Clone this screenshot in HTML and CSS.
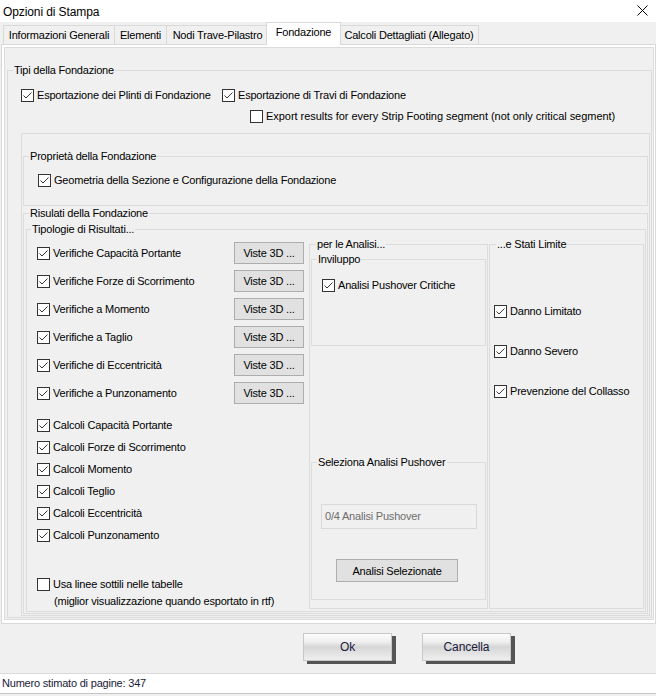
FILE: index.html
```html
<!DOCTYPE html>
<html lang="it">
<head>
<meta charset="utf-8">
<title>Opzioni di Stampa</title>
<link rel="stylesheet" href="styles.css">
</head>
<body>
<div class="window">
  <div class="titlebar">
    <span class="title">Opzioni di Stampa</span>
    <svg class="close" viewBox="0 0 11 11" width="11" height="11"><path d="M0.5 0.5L10.5 10.5M10.5 0.5L0.5 10.5"/></svg>
  </div>
  <div class="tabs">
    <div class="tab t1">Informazioni Generali</div>
    <div class="tab t2">Elementi</div>
    <div class="tab t3">Nodi Trave-Pilastro</div>
    <div class="tab active">Fondazione</div>
    <div class="tab t5">Calcoli Dettagliati (Allegato)</div>
  </div>
  <div class="tabpanel">
    <div class="page">
      <fieldset class="grp tipi">
        <legend>Tipi della Fondazione</legend>
        <div class="row row1">
          <label class="cb first"><span class="box"><svg viewBox="0 0 11 11"><polyline points="1.5,5.5 4,8 9.5,2.5"/></svg></span>Esportazione dei Plinti di Fondazione</label>
          <label class="cb"><span class="box"><svg viewBox="0 0 11 11"><polyline points="1.5,5.5 4,8 9.5,2.5"/></svg></span>Esportazione di Travi di Fondazione</label>
        </div>
        <div class="row row2">
          <label class="cb export"><span class="box"></span>Export results for every Strip Footing segment (not only critical segment)</label>
        </div>
        <div class="boxa">
          <fieldset class="grp prop">
            <legend>Proprietà della Fondazione</legend>
            <div class="row prow">
              <label class="cb"><span class="box"><svg viewBox="0 0 11 11"><polyline points="1.5,5.5 4,8 9.5,2.5"/></svg></span>Geometria della Sezione e Configurazione della Fondazione</label>
            </div>
          </fieldset>
          <fieldset class="grp ris">
            <legend>Risulati della Fondazione</legend>
            <fieldset class="grp tipol">
              <legend>Tipologie di Risultati...</legend>
              <div class="cols">
                <div class="leftcol">
                  <div class="viste">
                    <div class="vrow"><label class="cb"><span class="box"><svg viewBox="0 0 11 11"><polyline points="1.5,5.5 4,8 9.5,2.5"/></svg></span>Verifiche Capacità Portante</label><button class="btn viste3d">Viste 3D ...</button></div>
                    <div class="vrow"><label class="cb"><span class="box"><svg viewBox="0 0 11 11"><polyline points="1.5,5.5 4,8 9.5,2.5"/></svg></span>Verifiche Forze di Scorrimento</label><button class="btn viste3d">Viste 3D ...</button></div>
                    <div class="vrow"><label class="cb"><span class="box"><svg viewBox="0 0 11 11"><polyline points="1.5,5.5 4,8 9.5,2.5"/></svg></span>Verifiche a Momento</label><button class="btn viste3d">Viste 3D ...</button></div>
                    <div class="vrow"><label class="cb"><span class="box"><svg viewBox="0 0 11 11"><polyline points="1.5,5.5 4,8 9.5,2.5"/></svg></span>Verifiche a Taglio</label><button class="btn viste3d">Viste 3D ...</button></div>
                    <div class="vrow"><label class="cb"><span class="box"><svg viewBox="0 0 11 11"><polyline points="1.5,5.5 4,8 9.5,2.5"/></svg></span>Verifiche di Eccentricità</label><button class="btn viste3d">Viste 3D ...</button></div>
                    <div class="vrow"><label class="cb"><span class="box"><svg viewBox="0 0 11 11"><polyline points="1.5,5.5 4,8 9.5,2.5"/></svg></span>Verifiche a Punzonamento</label><button class="btn viste3d">Viste 3D ...</button></div>
                  </div>
                  <div class="calcoli">
                    <label class="cb crow"><span class="box"><svg viewBox="0 0 11 11"><polyline points="1.5,5.5 4,8 9.5,2.5"/></svg></span>Calcoli Capacità Portante</label>
                    <label class="cb crow"><span class="box"><svg viewBox="0 0 11 11"><polyline points="1.5,5.5 4,8 9.5,2.5"/></svg></span>Calcoli Forze di Scorrimento</label>
                    <label class="cb crow"><span class="box"><svg viewBox="0 0 11 11"><polyline points="1.5,5.5 4,8 9.5,2.5"/></svg></span>Calcoli Momento</label>
                    <label class="cb crow"><span class="box"><svg viewBox="0 0 11 11"><polyline points="1.5,5.5 4,8 9.5,2.5"/></svg></span>Calcoli Teglio</label>
                    <label class="cb crow"><span class="box"><svg viewBox="0 0 11 11"><polyline points="1.5,5.5 4,8 9.5,2.5"/></svg></span>Calcoli Eccentricità</label>
                    <label class="cb crow"><span class="box"><svg viewBox="0 0 11 11"><polyline points="1.5,5.5 4,8 9.5,2.5"/></svg></span>Calcoli Punzonamento</label>
                  </div>
                  <div class="usa">
                    <label class="cb urow"><span class="box"></span>Usa linee sottili nelle tabelle</label>
                    <div class="note">(miglior visualizzazione quando esportato in rtf)</div>
                  </div>
                </div>
                <fieldset class="grp analisi">
                  <legend>per le Analisi...</legend>
                  <fieldset class="grp invil">
                    <legend>Inviluppo</legend>
                    <div class="row irow">
                      <label class="cb"><span class="box"><svg viewBox="0 0 11 11"><polyline points="1.5,5.5 4,8 9.5,2.5"/></svg></span>Analisi Pushover Critiche</label>
                    </div>
                  </fieldset>
                  <fieldset class="grp selez">
                    <legend>Seleziona Analisi Pushover</legend>
                    <div class="field">0/4 Analisi Pushover</div>
                    <button class="btn selbtn">Analisi Selezionate</button>
                  </fieldset>
                </fieldset>
                <fieldset class="grp stati">
                  <legend>...e Stati Limite</legend>
                  <div class="row srow"><label class="cb"><span class="box"><svg viewBox="0 0 11 11"><polyline points="1.5,5.5 4,8 9.5,2.5"/></svg></span>Danno Limitato</label></div>
                  <div class="row srow"><label class="cb"><span class="box"><svg viewBox="0 0 11 11"><polyline points="1.5,5.5 4,8 9.5,2.5"/></svg></span>Danno Severo</label></div>
                  <div class="row srow"><label class="cb"><span class="box"><svg viewBox="0 0 11 11"><polyline points="1.5,5.5 4,8 9.5,2.5"/></svg></span>Prevenzione del Collasso</label></div>
                </fieldset>
              </div>
            </fieldset>
          </fieldset>
        </div>
      </fieldset>
    </div>
  </div>
  <div class="btnbar">
    <button class="dlgbtn">Ok</button>
    <button class="dlgbtn">Cancella</button>
  </div>
  <div class="status">Numero stimato di pagine: 347</div>
</div>
</body>
</html>
```
FILE: styles.css
```css
* { box-sizing: border-box; }
html, body { margin: 0; padding: 0; }
body {
  width: 656px;
  height: 696px;
  overflow: hidden;
  background: #f0f0f0;
  font-family: "Liberation Sans", Arial, sans-serif;
  font-size: 11px;
  letter-spacing: -0.2px;
  color: #000;
}
.window { width: 656px; height: 696px; display: flex; flex-direction: column; }

/* title bar */
.titlebar {
  height: 22px; background: #fff;
  display: flex; justify-content: space-between; align-items: flex-start;
  padding: 0 8px 0 3px;
}
.title { font-size: 12px; letter-spacing: -0.1px; line-height: 22px; padding-top: 1px; }
.close { margin-top: 5px; }
.close path { stroke: #000; stroke-width: 1; fill: none; }

/* tabs */
.tabs { height: 22px; display: flex; align-items: flex-end; padding-left: 3px; }
.tab {
  height: 19px; line-height: 18px; text-align: center;
  border: 1px solid #d9d9d9; border-bottom: 0; border-right: 0;
  background: #f0f0f0; white-space: nowrap;
}
.t1 { width: 111px; }
.t2 { width: 52px; }
.t3 { width: 102px; }
.t5 { width: 140px; border-right: 1px solid #d9d9d9; }
.tab.active {
  width: 75px; height: 23px; line-height: 19px; margin: 0 -2px -1px -2px;
  background: #fff; border-right: 1px solid #d9d9d9;
  position: relative; z-index: 1;
}

/* tab panel */
.tabpanel {
  margin-left: 1px; width: 655px; height: 580px;
  border: 1px solid #d9d9d9; background: #fff;
  padding: 2px 1px 3px 2px; display: flex;
}
.page {
  flex: 1; border: 1px solid #dcdcdc; background: #f0f0f0;
  padding: 16px 1px 1px 2px; display: flex; flex-direction: column;
}

/* group boxes */
.grp {
  margin: 0; padding: 0; min-width: 0;
  border: 1px solid #dcdcdc;
  display: flex; flex-direction: column;
}
.grp > legend { margin-left: 5px; padding: 0 1px; line-height: 13px; white-space: nowrap; }

.cb { display: flex; align-items: center; line-height: 13px; white-space: nowrap; }
.box {
  width: 13px; height: 13px; flex: none; margin-right: 3px;
  border: 1px solid #333; background: #fff; display: flex;
}
.box svg { width: 11px; height: 11px; }
.box polyline { fill: none; stroke: #333; stroke-width: 1; }

.row { height: 21px; display: flex; align-items: center; }

.tipi { flex: 1; }
.row1 { margin-top: 8px; padding-left: 13px; }
.row1 .first { width: 201px; }
.row2 { padding-left: 242px; }
.export { letter-spacing: -0.04px; }

.boxa {
  flex: 1; margin: 6px 1px 1px 13px;
  border: 1px solid #dcdcdc;
  padding: 16px 1px 1px 1px;
  display: flex; flex-direction: column;
}
.prop { height: 56px; }
.prow { margin-top: 7px; padding-left: 14px; }
.ris { flex: 1; margin-top: 1px; }
.tipol { flex: 1; margin: 3px 1px 1px 2px; }
.tipol > legend { margin-left: 4px; }
.cols { flex: 1; display: flex; margin: 2px 0 2px 0; padding-right: 1px; }

.leftcol { width: 282px; padding: 4px 5px 0 10px; display: flex; flex-direction: column; }
.viste { display: flex; flex-direction: column; gap: 6px; }
.vrow { height: 22px; display: flex; align-items: center; justify-content: space-between; }
.btn {
  font-family: inherit; font-size: 11px; letter-spacing: -0.2px; color: #000;
  background: #e1e1e1; border: 1px solid #adadad; padding: 0; margin: 0;
}
.viste3d { width: 70px; height: 22px; }
.calcoli { margin-top: 10px; display: flex; flex-direction: column; }
.crow { height: 22px; }
.usa { margin-top: 28px; }
.urow { height: 21px; }
.note { line-height: 13px; padding-left: 17px; white-space: nowrap; }

.analisi { width: 179px; padding: 0 1px 8px 1px; }
.invil { height: 93px; margin-top: 2px; }
.irow { margin-top: 9px; padding-left: 10px; }
.invil > legend, .selez > legend { margin-left: 5px; }
.selez { margin-top: auto; height: 144px; }
.field {
  width: 156px; height: 25px; margin: 35px 0 0 9px;
  border: 1px solid #d9d9d9; background: #f0f0f0;
  color: #6d6d6d; padding-left: 3px; line-height: 23px; white-space: nowrap;
}
.selbtn { width: 122px; height: 23px; margin: 30px 0 0 24px; }

.stati { flex: 1; margin-left: 1px; }
.stati > legend { margin-left: 6px; }
.srow { padding-left: 4px; margin-top: 19px; }
.srow:first-of-type { margin-top: 50px; }

/* dialog buttons */
.btnbar { height: 49px; display: flex; padding: 9px 0 0 303px; gap: 30px; }
.dlgbtn {
  width: 89px; height: 28px; padding: 0; margin: 0;
  font-family: inherit; font-size: 12px; letter-spacing: -0.1px; color: #1a1a3a;
  border: 1px solid #c8c8c8;
  background: linear-gradient(to bottom, #fdfdfd 0%, #efefef 30%, #d6d6d6 50%, #e3e3e3 75%, #eeeeee 100%);
  box-shadow: 4px 3px 0 #555;
}

/* status bar */
.status {
  height: 21px; background: #fff;
  border-top: 1px solid #dadada; border-bottom: 1px solid #c4c4c4;
  padding-left: 2px; line-height: 19px; color: #1a1a3a; white-space: nowrap;
}
```
